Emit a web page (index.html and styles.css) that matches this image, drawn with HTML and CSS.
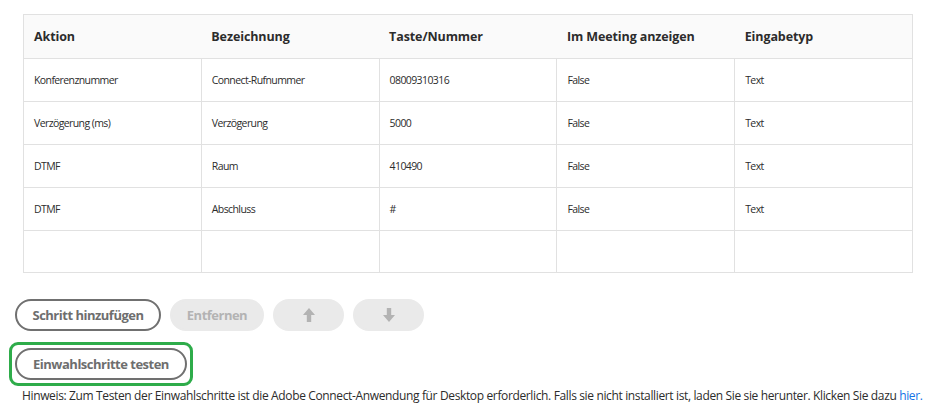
FILE: index.html
```html
<!DOCTYPE html>
<html lang="de">
<head>
<meta charset="utf-8">
<title>Einwahlschritte</title>
<link rel="stylesheet" href="styles.css">
</head>
<body>
<div class="page">
  <table class="steps">
    <thead>
      <tr>
        <th>Aktion</th>
        <th>Bezeichnung</th>
        <th>Taste/Nummer</th>
        <th>Im Meeting anzeigen</th>
        <th>Eingabetyp</th>
      </tr>
    </thead>
    <tbody>
      <tr><td>Konferenznummer</td><td>Connect-Rufnummer</td><td>08009310316</td><td>False</td><td>Text</td></tr>
      <tr><td>Verzögerung (ms)</td><td>Verzögerung</td><td>5000</td><td>False</td><td>Text</td></tr>
      <tr><td>DTMF</td><td>Raum</td><td>410490</td><td>False</td><td>Text</td></tr>
      <tr><td>DTMF</td><td>Abschluss</td><td>#</td><td>False</td><td>Text</td></tr>
      <tr class="empty"><td></td><td></td><td></td><td></td><td></td></tr>
    </tbody>
  </table>

  <div class="actions">
    <button class="btn btn-outline">Schritt hinzufügen</button>
    <button class="btn btn-disabled btn-remove">Entfernen</button>
    <button class="btn btn-disabled btn-icon" aria-label="Nach oben">
      <svg width="12" height="14" viewBox="0 0 12 14"><path d="M6 0 L12 7 L8.2 7 L8.2 14 L3.8 14 L3.8 7 L0 7 Z" fill="#b3b3b3"/></svg>
    </button>
    <button class="btn btn-disabled btn-icon" aria-label="Nach unten">
      <svg width="12" height="14" viewBox="0 0 12 14"><path d="M6 14 L12 7 L8.2 7 L8.2 0 L3.8 0 L3.8 7 L0 7 Z" fill="#b3b3b3"/></svg>
    </button>
  </div>

  <div class="highlight">
    <button class="btn btn-outline btn-test">Einwahlschritte testen</button>
  </div>

  <p class="hint">Hinweis: Zum Testen der Einwahlschritte ist die Adobe Connect-Anwendung für Desktop erforderlich. Falls sie nicht installiert ist, laden Sie sie herunter. Klicken Sie dazu <a href="#">hier.</a></p>
</div>
</body>
</html>
```

FILE: styles.css
```css
html, body {
  margin: 0;
  padding: 0;
  background: #ffffff;
}

body {
  font-family: "Open Sans", "Noto Sans", sans-serif;
  color: #2c2c2c;
}

.page {
  padding: 14px 0 0 15px;
}

.steps {
  margin-left: 8px;
  width: 890px;
  border-collapse: collapse;
  table-layout: fixed;
  border: 1px solid #e1e1e1;
}

.steps th {
  background: #fafafa;
  height: 43px;
  padding: 0 10px;
  text-align: left;
  font-size: 12.5px;
  font-weight: 700;
  letter-spacing: -0.1px;
  color: #2c2c2c;
  border-bottom: 1px solid #e1e1e1;
}

.steps td {
  height: 42px;
  padding: 0 10px;
  font-size: 10.5px;
  letter-spacing: -0.6px;
  color: #2c2c2c;
  border: 1px solid #e1e1e1;
}

.steps tr.empty td {
  height: 41px;
}

.actions {
  display: flex;
  gap: 9px;
  margin-top: 26px;
}

.btn {
  font-family: inherit;
  height: 32px;
  border-radius: 16px;
  font-size: 13px;
  font-weight: 700;
  letter-spacing: -0.5px;
  padding: 0;
  white-space: nowrap;
  box-sizing: border-box;
  display: inline-flex;
  align-items: center;
  justify-content: center;
  cursor: pointer;
}

.btn-outline {
  background: #ffffff;
  border: 2px solid #707070;
  color: #6e6e6e;
  width: 146px;
}

.btn-disabled {
  background: #eaeaea;
  border: 2px solid #eaeaea;
  color: #b3b3b3;
}

.btn-remove {
  width: 94px;
}

.btn-icon {
  width: 71px;
}

.highlight {
  display: inline-block;
  margin: 11px 0 0 -6px;
  padding: 3px;
  border: 3px solid #2eac4a;
  border-radius: 9px;
}

.highlight .btn-test {
  width: 172px;
  display: flex;
}

.hint {
  margin: 1px 0 0 7px;
  font-size: 12px;
  letter-spacing: -0.36px;
  white-space: nowrap;
  color: #2c2c2c;
}

.hint a {
  color: #1473e6;
  text-decoration: none;
}
```
